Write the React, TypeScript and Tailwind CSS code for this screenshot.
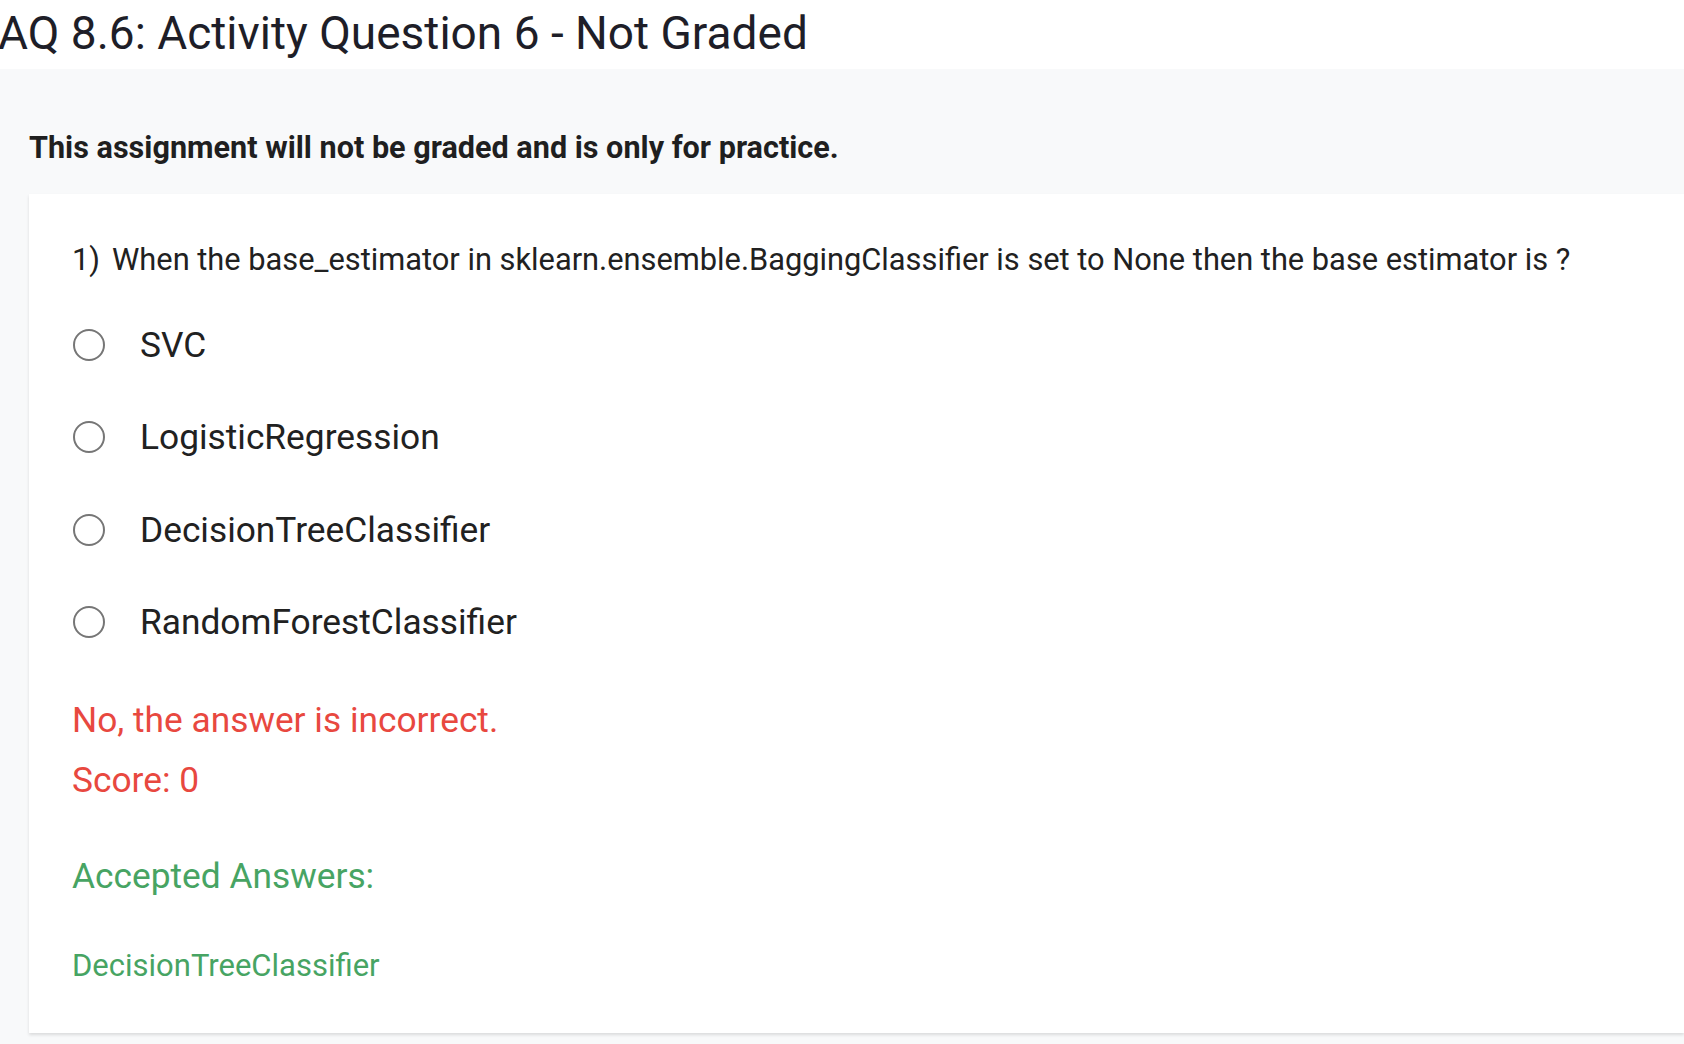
import React from 'react'

const options = ['SVC', 'LogisticRegression', 'DecisionTreeClassifier', 'RandomForestClassifier']

function Radio() {
  return <span className="block w-[32px] h-[32px] ml-[1px] rounded-full border-2 border-[#767676] bg-white shrink-0" />
}

export default function App() {
  return (
    <div className="w-[1684px] h-[1044px] overflow-hidden bg-white font-['Roboto',sans-serif]">
      {/* page title */}
      <div className="h-[69px] pt-[6px]">
        <h1 className="-ml-[2px] text-[46px] leading-[54px] text-[#1e1e28] whitespace-nowrap">
          AQ 8.6: Activity Question 6 - Not Graded
        </h1>
      </div>

      <div className="bg-[#f8f9fa] pl-[29px] h-[975px]">
        <p className="pt-[61px] h-[125px] text-[30.6px] leading-[36px] font-bold text-[#1f1f1f] whitespace-nowrap">
          This assignment will not be graded and is only for practice.
        </p>

        <div className="bg-white shadow-[0_2px_3px_rgba(0,0,0,0.12)] pl-[43px] pt-[48px] pb-[49px]">
          <div className="flex text-[30.8px] leading-[36px] text-[#212121] whitespace-nowrap">
            <span>1)</span>
            <span className="ml-[12px]">
              When the base_estimator in sklearn.ensemble.BaggingClassifier is set to None then the base estimator is ?
            </span>
          </div>

          <div className="mt-[20.5px]">
            {options.map((o) => (
              <div key={o} className="flex items-center h-[92.5px]">
                <Radio />
                <span className="ml-[35px] text-[35.3px] leading-[40px] text-[#212121]">{o}</span>
              </div>
            ))}
          </div>

          <p className="mt-[31px] text-[35.3px] leading-[40px] text-[#e8483f]">No, the answer is incorrect.</p>
          <p className="mt-[20px] text-[35.3px] leading-[40px] text-[#e8483f]">Score: 0</p>

          <p className="mt-[56px] text-[35.3px] leading-[40px] text-[#47a463]">Accepted Answers:</p>
          <p className="mt-[52px] text-[31px] leading-[36px] text-[#47a463]">DecisionTreeClassifier</p>
        </div>
      </div>
    </div>
  )
}
